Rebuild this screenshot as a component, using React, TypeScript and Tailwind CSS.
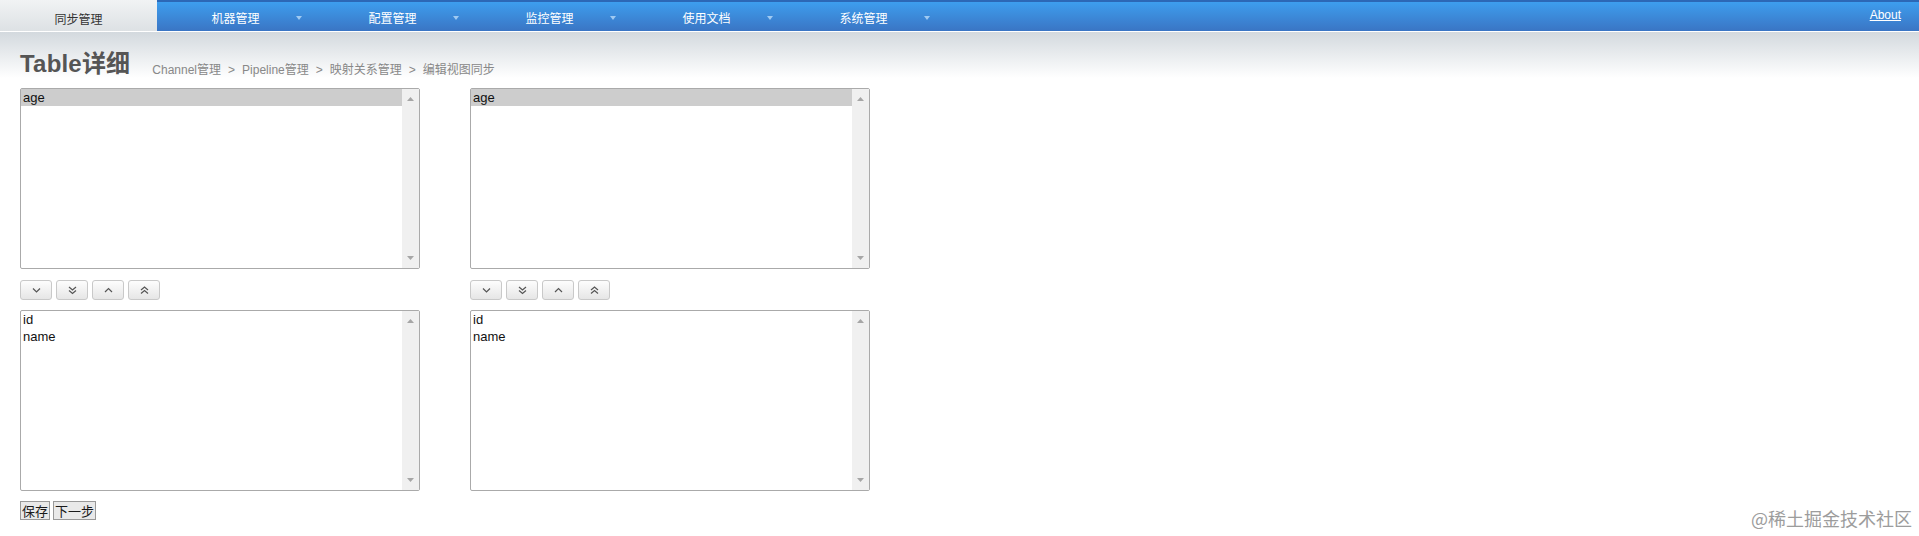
import React from "react";

const MENU = ["同步管理", "机器管理", "配置管理", "监控管理", "使用文档", "系统管理"];
const CRUMBS = ["Channel管理", "Pipeline管理", "映射关系管理", "编辑视图同步"];

function MenuArrow() {
  return (
    <svg width="6" height="4" viewBox="0 0 6 4" className="absolute right-[12px] top-[14px]">
      <path d="M0 0 L6 0 L3 4 Z" fill="#9fcaf2" />
    </svg>
  );
}

function NavBar() {
  return (
    <div className="flex h-[32px] border-b border-b-white font-['Noto_Sans_CJK_SC',sans-serif] text-[12px]">
      {MENU.map((label, i) =>
        i === 0 ? (
          <div
            key={label}
            className="flex w-[157px] items-center justify-center bg-gradient-to-b from-[#f1f3f4] to-[#dde1e4] pt-[6px] text-[#333]"
          >
            {label}
          </div>
        ) : (
          <div
            key={label}
            className="relative flex w-[157px] items-center justify-center border-t-2 border-t-[#2c68b6] bg-gradient-to-b from-[#3d9eee] to-[#3a75c4] pt-[3px] text-white"
          >
            {label}
            <MenuArrow />
          </div>
        )
      )}
      <div className="flex flex-1 items-center justify-end border-t-2 border-t-[#2c68b6] bg-gradient-to-b from-[#3d9eee] to-[#3a75c4] pb-[4px] pr-[18px]">
        <span className="font-['Liberation_Sans',sans-serif] text-white underline">About</span>
      </div>
    </div>
  );
}

function ScrollArrow({ up }: { up?: boolean }) {
  return (
    <svg width="7" height="4" viewBox="0 0 7 4">
      <path d={up ? "M0 4 L7 4 L3.5 0 Z" : "M0 0 L7 0 L3.5 4 Z"} fill="#a6a6a6" />
    </svg>
  );
}

function ListBox({ items, selected }: { items: string[]; selected?: string }) {
  return (
    <div className="flex h-[181px] w-[400px] rounded-[2px] border border-[#aaaaaa] bg-white">
      <div className="flex-1">
        {items.map((item) => (
          <div
            key={item}
            className={
              "h-[17px] px-[2px] text-[13px] leading-[17px] text-[#111] " +
              (item === selected ? "bg-[#cdcdcd]" : "")
            }
          >
            {item}
          </div>
        ))}
      </div>
      <div className="flex w-[17px] flex-col items-center justify-between bg-[#f0f0f0] py-[8px]">
        <ScrollArrow up />
        <ScrollArrow />
      </div>
    </div>
  );
}

function Chevron({ kind }: { kind: "down" | "bottom" | "up" | "top" }) {
  const single = kind === "down" || kind === "up";
  const isDown = kind === "down" || kind === "bottom";
  const one = isDown ? "M1 1.5 L4.5 5 L8 1.5" : "M1 5 L4.5 1.5 L8 5";
  const two = isDown ? "M1 1 L4.5 4 L8 1 M1 4.5 L4.5 7.5 L8 4.5" : "M1 4 L4.5 1 L8 4 M1 7.5 L4.5 4.5 L8 7.5";
  return (
    <svg width="9" height={single ? 7 : 9} viewBox={single ? "0 0 9 7" : "0 0 9 9"}>
      <path d={single ? one : two} fill="none" stroke="#555" strokeWidth="1.2" />
    </svg>
  );
}

function MoveButtons() {
  return (
    <div className="flex gap-[4px]">
      {(["down", "bottom", "up", "top"] as const).map((k) => (
        <button
          key={k}
          className="flex h-[20px] w-[32px] items-center justify-center rounded-[3px] border border-[#c9c9c9] bg-gradient-to-b from-[#fdfdfd] to-[#e6e6e6]"
        >
          <Chevron kind={k} />
        </button>
      ))}
    </div>
  );
}

function Column() {
  return (
    <div className="flex flex-col">
      <ListBox items={["age"]} selected="age" />
      <div className="mt-[11px]">
        <MoveButtons />
      </div>
      <div className="mt-[10px]">
        <ListBox items={["id", "name"]} />
      </div>
    </div>
  );
}

export default function App() {
  return (
    <div className="relative h-[536px] w-[1919px] overflow-hidden bg-white font-['Liberation_Sans','Noto_Sans_CJK_SC',sans-serif]">
      <NavBar />

      {/* page title + breadcrumb */}
      <div className="flex h-[56px] items-end bg-[linear-gradient(to_bottom,#d3d9de,#ffffff_46px)] px-[20px] pb-[10px]">
        <h1 className="text-[24px] font-bold leading-[28px] tracking-[0.2px] text-[#555]">Table详细</h1>
        <div className="ml-[22px] text-[12px] leading-[16px] text-[#888]">
          {CRUMBS.map((c, i) => (
            <span key={c}>
              {i > 0 && <span className="mx-[7px]">&gt;</span>}
              {c}
            </span>
          ))}
        </div>
      </div>

      <div className="px-[20px]">
        <div className="flex gap-[50px]">
          <Column />
          <Column />
        </div>
        <div className="mt-[10px] flex gap-[3px] font-['Noto_Sans_CJK_SC',sans-serif]">
          <button className="h-[19px] border border-[#999] bg-[#e9e9e9] px-[1px] text-[13px] leading-[17px] text-[#1a1a1a]">
            保存
          </button>
          <button className="h-[19px] border border-[#999] bg-[#e9e9e9] px-[1px] text-[13px] leading-[17px] text-[#1a1a1a]">
            下一步
          </button>
        </div>
      </div>

      <div className="absolute bottom-[4px] right-[7px] font-['Noto_Sans_CJK_SC',sans-serif] text-[18px] text-[#9c9c9c]">
        @稀土掘金技术社区
      </div>
    </div>
  );
}
